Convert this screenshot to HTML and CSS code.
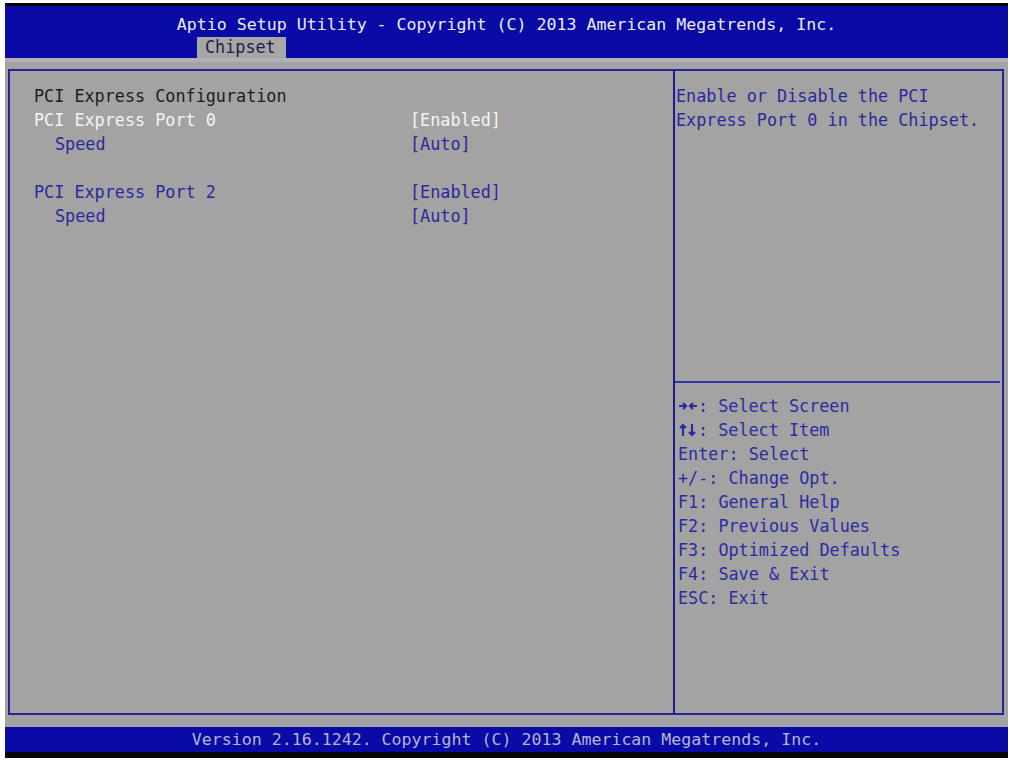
FILE: index.html
```html
<!DOCTYPE html>
<html lang="en">
<head>
  <meta charset="UTF-8" />
  <title>Aptio Setup Utility - Chipset</title>
  <link rel="stylesheet" href="styles.css">
</head>
<body>
  <div class="screen">
    <header class="topbar">
      <div class="title">Aptio Setup Utility - Copyright (C) 2013 American Megatrends, Inc.</div>
      <div class="tabs"><span class="tab">Chipset</span></div>
    </header>

    <main class="workspace">
      <div class="frame">
        <section class="settings">
          <div class="row heading">PCI Express Configuration</div>
          <div class="row selected"><span class="label">PCI Express Port 0</span><span class="value">[Enabled]</span></div>
          <div class="row"><span class="label sub">Speed</span><span class="value">[Auto]</span></div>
          <div class="row blank"></div>
          <div class="row"><span class="label">PCI Express Port 2</span><span class="value">[Enabled]</span></div>
          <div class="row"><span class="label sub">Speed</span><span class="value">[Auto]</span></div>
        </section>

        <aside class="help">
          <div class="desc">
            <div class="row">Enable or Disable the PCI</div>
            <div class="row">Express Port 0 in the Chipset.</div>
          </div>
          <!-- key legend -->
          <ul class="keys">
            <li><svg class="arrows" viewBox="0 0 20 14" width="20" height="14"><path d="M1 7h7M5 4l3 3-3 3M19 7h-7M15 4l-3 3 3 3" /></svg>: Select Screen</li>
            <li><svg class="arrows" viewBox="0 0 20 14" width="20" height="14"><path d="M5 13V2M2 5l3-3 3 3M14 1v11M11 9l3 3 3-3" /></svg>: Select Item</li>
            <li>Enter: Select</li>
            <li>+/-: Change Opt.</li>
            <li>F1: General Help</li>
            <li>F2: Previous Values</li>
            <li>F3: Optimized Defaults</li>
            <li>F4: Save &amp; Exit</li>
            <li>ESC: Exit</li>
          </ul>
        </aside>
      </div>
    </main>

    <footer class="bottombar">Version 2.16.1242. Copyright (C) 2013 American Megatrends, Inc.</footer>
  </div>
</body>
</html>
```

FILE: styles.css
```css
body {
  margin: 0;
  background-color: #ffffff;
  font-family: 'DejaVu Sans Mono', 'Liberation Mono', monospace;
  font-size: 16.8px;
}
.screen {
  margin: 3px 0 0 5px;
  width: 1003px;
}
.topbar {
  background-color: #0a0aa6;
  border-top: 3px solid #050505;
  height: 52px;
  color: #ececf4;
}
.title {
  padding-top: 7px;
  line-height: 24px;
  height: 24px;
  font-size: 16.6px;
  text-align: center;
  white-space: pre;
}
.tabs {
  height: 21px;
}
.tab {
  display: inline-block;
  margin-left: 192px;
  padding: 0 10px 0 8px;
  height: 21px;
  line-height: 21px;
  background-color: #a6a6a6;
  color: #1e1e4a;
}
.workspace {
  background-color: #a3a3a3;
  border-top: 4px solid #b0b0b6;
  padding: 7px 4px 12px 3px;
}
.frame {
  display: grid;
  grid-template-columns: 665px 1fr;
  height: 642px;
  border: 2px solid #24249a;
}
.settings {
  border-right: 2px solid #1c1c90;
  padding: 13px 0 0 24px;
}
.row {
  display: flex;
  height: 24px;
  line-height: 24px;
  color: #2a2a9c;
  white-space: pre;
}
.heading {
  color: #1c1c1c;
}
.selected {
  color: #f4f4f4;
}
.label {
  width: 376px;
}
.label.sub {
  padding-left: 21px;
  width: 355px;
}
.help {
  display: flex;
  flex-direction: column;
}
.desc {
  height: 297px;
  padding: 13px 0 0 1px;
  border-bottom: 2px solid #3434a8;
  margin: 0 2px 0 0;
}
.keys {
  list-style: none;
  margin: 0;
  padding: 11px 0 0 3px;
  color: #2c2ca2;
}
.keys li {
  height: 24px;
  line-height: 24px;
  white-space: pre;
}
.arrows {
  vertical-align: -1px;
  fill: none;
  stroke: #2c2ca2;
  stroke-width: 2.2;
}
.bottombar {
  background-color: #0a0aa6;
  border-bottom: 6px solid #050505;
  height: 25px;
  line-height: 25px;
  text-align: center;
  color: #b4b4d6;
  font-size: 16.6px;
  white-space: pre;
}
```
